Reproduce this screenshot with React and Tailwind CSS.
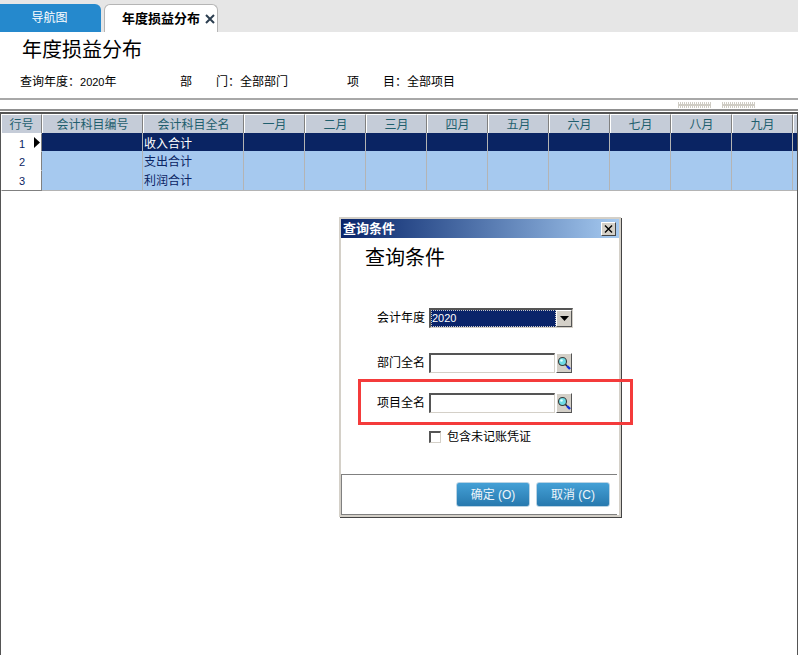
const months = ['一月', '二月', '三月', '四月', '五月', '六月', '七月', '八月', '九月', ''];
const rows = [
    { id: 1, name: '收入合计', active: true, height: 'h-[18px]' },
    { id: 2, name: '支出合计', height: 'h-[19px]' },
    { id: 3, name: '利润合计', height: 'h-[19px]' },
];

const gridCols = 'grid grid-cols-[41px_101px_101px_repeat(10,61px)]';
const fontStack = 'font-["Liberation_Sans","Noto_Sans_CJK_SC",sans-serif]';

const SearchIcon = () => (
    <svg width="14" height="14" viewBox="0 0 14 14">
        <circle cx="5.5" cy="5.5" r="4" fill="#6fdce6" stroke="#3a3a3a" strokeWidth="1.1" />
        <circle cx="4.5" cy="4.5" r="1.3" fill="#e4ffff" />
        <path d="M8.5 8.5L10 10" stroke="#222" strokeWidth="1.6" />
        <path d="M10 10L13 13" stroke="#1030d8" strokeWidth="2.4" />
    </svg>
);

const SearchField = ({ label, className }) => (
    <div className={`flex items-center ${className}`}>
        <span className="w-[84px] text-right text-[12px] text-black">{label}</span>
        <div className="ml-1 h-5 w-[126px] border-t-2 border-l-2 border-t-[#555] border-l-[#555] border-r border-b border-r-[#d4d0c8] border-b-[#d4d0c8] bg-white"></div>
        <div className="ml-px flex h-[20px] w-4 items-center justify-center border border-t-white border-l-white border-r-[#555] border-b-[#555] bg-[#d4d0c8]">
            <SearchIcon />
        </div>
    </div>
);

const Grip = ({ id, className }) => (
    <svg className={className} width="33" height="6" viewBox="0 0 33 6">
        <defs>
            <pattern id={id} width="4" height="6" patternUnits="userSpaceOnUse">
                <path d="M0.5 0V6M2.5 0V6" stroke="#cfccc4" strokeWidth="1" fill="none" />
                <path d="M0 3H4" stroke="#cfccc4" strokeWidth="2" fill="none" />
            </pattern>
        </defs>
        <rect width="33" height="6" fill={`url(#${id})`} />
    </svg>
);

const DialogButton = ({ children }) => (
    <button className="h-[25px] w-[74px] rounded-[3px] border border-[#b9d3e4] bg-gradient-to-b from-[#44a0d6] to-[#2779ae] text-[12px] text-[#eef5fa]">
        {children}
    </button>
);

const QueryDialog = () => (
    <div className="absolute left-[339px] top-[217px] flex h-[300px] w-[282px] flex-col border-2 border-[#d4d0c8] bg-white shadow-[1px_1px_0_#444]">
        <div className="flex h-[19px] items-center justify-between bg-gradient-to-r from-[#0a246a] to-[#a6caf0] pl-0.5 pr-[3px]">
            <span className="text-[13px] font-bold text-white">查询条件</span>
            <div className="flex h-[14px] w-[15px] items-center justify-center border border-t-white border-l-white border-r-[#444] border-b-[#444] bg-[#d4d0c8]">
                <svg width="9" height="8" viewBox="0 0 9 8">
                    <path d="M1 0.5L8 7.5M8 0.5L1 7.5" stroke="#000" strokeWidth="1.4" />
                </svg>
            </div>
        </div>

        <h2 className="ml-[24px] mt-[6px] text-[20px] leading-[28px] text-black">查询条件</h2>

        {/* form */}
        <div className="mt-[36px] flex items-center">
            <span className="w-[84px] text-right text-[12px] text-black">会计年度</span>
            <div className="ml-1 flex h-5 w-[144px] border-t-2 border-l-2 border-t-[#555] border-l-[#555] border-r border-b border-r-[#d4d0c8] border-b-[#d4d0c8] bg-white">
                <div className="flex flex-1 items-center border border-dotted border-[#c8c8c8] bg-[#0a246a] text-[11px] leading-none text-white">2020</div>
                <div className="flex w-4 items-center justify-center border border-t-white border-l-white border-r-[#555] border-b-[#555] bg-[#d4d0c8]">
                    <svg width="9" height="5" viewBox="0 0 9 5">
                        <path d="M0 0H9L4.5 5Z" fill="#000" />
                    </svg>
                </div>
            </div>
        </div>
        <SearchField label="部门全名" className="mt-[25px]" />
        <SearchField label="项目全名" className="mt-5" />

        <div className="ml-[88px] mt-[15px] flex items-center">
            <div className="h-3 w-3 border-t-2 border-l-2 border-t-[#555] border-l-[#555] border-r border-b border-r-[#d4d0c8] border-b-[#d4d0c8] bg-white"></div>
            <span className="ml-1.5 text-[12px] text-black">包含未记账凭证</span>
        </div>

        {/* footer */}
        <div className="mr-0.5 mt-[28px] flex flex-1 justify-end gap-[6px] border-t border-l border-b border-[#808080] pr-[7px] pt-[7px]">
            <DialogButton>确定 (O)</DialogButton>
            <DialogButton>取消 (C)</DialogButton>
        </div>
    </div>
);

const App = () => {
    return (
        <div className={`relative h-[655px] w-[798px] overflow-hidden bg-white ${fontStack}`}>
            {/* Tabs */}
            <div className="flex h-8 items-end gap-[3px] bg-[#e6e6e6]">
                <div className="flex h-7 w-[101px] items-center justify-center rounded-tr-md bg-[#2589cd] pr-0.5 text-[12px] text-white">导航图</div>
                <div className="flex h-7 w-[114px] items-center rounded-t-md border border-b-0 border-[#b5b5b5] bg-white pl-[17px] text-[13px] font-bold text-black">
                    年度损益分布
                    <svg className="ml-[5px]" width="10" height="10" viewBox="0 0 10 10">
                        <path d="M1 1L9 9M9 1L1 9" stroke="#2c3e50" strokeWidth="2" />
                    </svg>
                </div>
            </div>

            {/* Report header */}
            <h1 className="ml-[22px] mt-[5px] text-[20px] leading-[27px] text-black">年度损益分布</h1>
            <div className="mt-[9px] flex h-[18px] items-center pl-5 text-[12px] text-black">
                <span className="w-[160px]">查询年度：<span className="text-[11px]">2020</span>年</span>
                <span className="w-[167px]"><span className="mr-6">部</span>门：全部部门</span>
                <span><span className="mr-6">项</span>目：全部项目</span>
            </div>

            <div className="mt-[7px] h-0.5 bg-[#a8a8a8]"></div>
            <div className="flex h-[9px] items-center pl-[678px]">
                <Grip id="grip-a" />
                <Grip id="grip-b" className="ml-[11px]" />
            </div>
            <div className="h-0.5 bg-[#909090]"></div>

            {/* Grid */}
            <div className="mt-px h-[543px] overflow-hidden border-t-2 border-l border-r border-[#555]">
                <div className={`${gridCols} h-[19px]`}>
                    {['行号', '会计科目编号', '会计科目全名', ...months].map((title, i) => (
                        <div key={i} className="flex items-center justify-center border border-t-white border-l-white border-r-[#808080] border-b-[#808080] bg-[#c5ccd8] pt-px text-[12px] text-[#1f5f6e]">
                            {title}
                        </div>
                    ))}
                </div>
                {rows.map((row) => (
                    <div key={row.id} className={`${gridCols} ${row.height}`}>
                        <div className="relative flex items-center border border-t-white border-l-white border-r-[#808080] border-b-[#808080] bg-white pl-[17px] pt-px text-[11px] text-[#0a2463]">
                            {row.id}
                            {row.active && (
                                <svg className="absolute left-[32px] top-[3px]" width="6" height="11" viewBox="0 0 6 11">
                                    <path d="M0 0L6 5.5L0 11Z" fill="#000" />
                                </svg>
                            )}
                        </div>
                        {['', row.name, ...months].map((text, i) => (
                            <div
                                key={i}
                                className={`flex items-center border-r border-b border-[#b4b4b4] pl-px pt-0.5 text-[12px] ${row.active ? 'bg-[#0a2463] text-white' : 'bg-[#a6c9ef] text-[#0a2463]'}`}
                            >
                                {i === 1 ? text : ''}
                            </div>
                        ))}
                    </div>
                ))}
            </div>

            <QueryDialog />

            {/* red highlight */}
            <div className="absolute left-[358px] top-[379px] h-[46px] w-[275px] border-[3px] border-[#f43b3b]"></div>
        </div>
    );
};

export default App;
